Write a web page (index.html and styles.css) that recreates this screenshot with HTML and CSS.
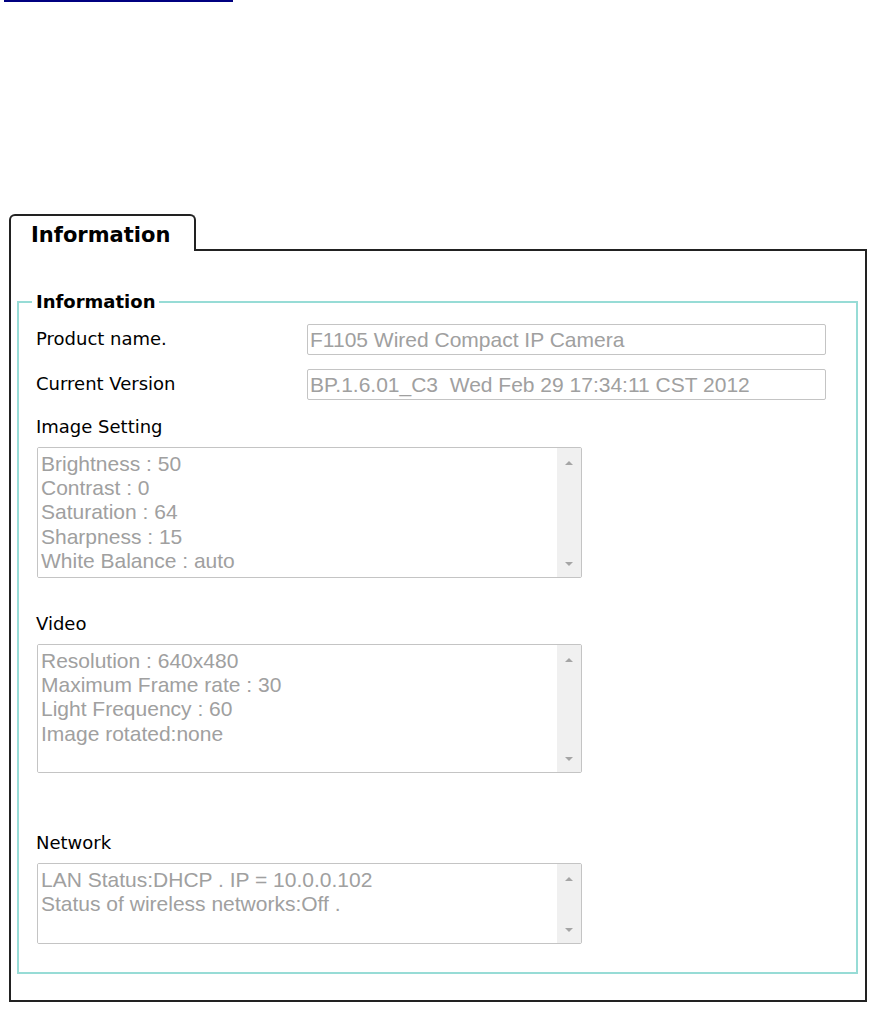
FILE: index.html
```html
<!DOCTYPE html>
<html lang="en">

<head>
    <meta charset="UTF-8">
    <meta name="viewport" content="width=device-width, initial-scale=1.0">
    <title>Information</title>
    <link rel="stylesheet" href="styles.css">
</head>

<body>
    <div class="topline"></div>

    <div class="tabs">
        <div class="tab">Information</div>
        <div class="tab-fill"></div>
    </div>

    <div class="panel">
        <fieldset class="info">
            <legend>Information</legend>

            <div class="row">
                <label for="product">Product name.</label>
                <input type="text" id="product" value="F1105 Wired Compact IP Camera" readonly>
            </div>
            <div class="row">
                <label for="version">Current Version</label>
                <input type="text" id="version" value="BP.1.6.01_C3  Wed Feb 29 17:34:11 CST 2012" readonly>
            </div>

            <div class="group first">
                <label class="group-label" for="image">Image Setting</label>
                <div class="tbox">
                    <textarea id="image" readonly>Brightness : 50
Contrast : 0
Saturation : 64
Sharpness : 15
White Balance : auto</textarea>
                    <div class="sbar"><span class="up"></span><span class="down"></span></div>
                </div>
            </div>

            <div class="group">
                <label class="group-label" for="video">Video</label>
                <div class="tbox video">
                    <textarea id="video" readonly>Resolution : 640x480
Maximum Frame rate : 30
Light Frequency : 60
Image rotated:none</textarea>
                    <div class="sbar"><span class="up"></span><span class="down"></span></div>
                </div>
            </div>

            <div class="group net">
                <label class="group-label" for="network">Network</label>
                <div class="tbox network">
                    <textarea id="network" readonly>LAN Status:DHCP . IP = 10.0.0.102
Status of wireless networks:Off .</textarea>
                    <div class="sbar"><span class="up"></span><span class="down"></span></div>
                </div>
            </div>
        </fieldset>
    </div>
</body>

</html>
```

FILE: styles.css
```css
body {
    margin: 0;
    font-family: "DejaVu Sans", Verdana, sans-serif;
    color: #000;
    background-color: #fff;
}

.topline {
    margin-left: 4px;
    width: 229px;
    height: 2px;
    background-color: #000080;
}

.tabs {
    display: flex;
    margin: 212px 0 0 9px;
    width: 858px;
}

.tab {
    width: 187px;
    box-sizing: border-box;
    border: 2px solid #222;
    border-bottom: none;
    border-radius: 6px 6px 0 0;
    padding: 7px 0 4px 20px;
    font-size: 21px;
    font-weight: bold;
    line-height: 24px;
}

.tab-fill {
    flex: 1;
    border-bottom: 2px solid #222;
}

.panel {
    margin-left: 9px;
    width: 858px;
    box-sizing: border-box;
    border: 2px solid #222;
    border-top: none;
    padding: 40px 7px 26px 6px;
}

.info {
    margin: 0;
    border: 2px solid #97dcd6;
    padding: 12px 10px 28px 17px;
}

.info legend {
    margin-left: -4px;
    padding: 0 4px;
    font-size: 18px;
    font-weight: bold;
    line-height: 21px;
}

.row {
    display: flex;
    align-items: flex-start;
}

.row + .row {
    margin-top: 14px;
}

.row label {
    width: 271px;
    margin-top: 4px;
    font-size: 18px;
    line-height: 21px;
}

.row input {
    width: 519px;
    height: 31px;
    box-sizing: border-box;
    border: 1px solid #c4c4c4;
    border-radius: 2px;
    padding: 0 2px;
    font-family: "Liberation Sans", Arial, sans-serif;
    font-size: 21px;
    color: #a0a0a0;
    background-color: #fff;
    outline: none;
}

.group {
    margin-top: 35px;
}

.group.first {
    margin-top: 16px;
}

.group.net {
    margin-top: 59px;
}

.group-label {
    display: block;
    margin-bottom: 10px;
    font-size: 18px;
    line-height: 21px;
}

.tbox {
    display: flex;
    width: 545px;
    height: 131px;
    margin-left: 1px;
    box-sizing: border-box;
    border: 1px solid #c4c4c4;
    border-radius: 2px;
    overflow: hidden;
}

.tbox.video {
    height: 129px;
}

.tbox.network {
    height: 81px;
}

.tbox textarea {
    flex: 1;
    border: none;
    padding: 4px 3px 3px;
    resize: none;
    overflow: hidden;
    font-family: "Liberation Sans", Arial, sans-serif;
    font-size: 21px;
    line-height: 24.2px;
    color: #a0a0a0;
    background-color: #fff;
    outline: none;
}

.sbar {
    width: 24px;
    background-color: #f0f0f0;
    display: flex;
    flex-direction: column;
    justify-content: space-between;
    align-items: center;
    padding: 13px 0 11px;
}

.sbar .up {
    border-left: 4px solid transparent;
    border-right: 4px solid transparent;
    border-bottom: 4px solid #a5a5a5;
}

.sbar .down {
    border-left: 4px solid transparent;
    border-right: 4px solid transparent;
    border-top: 4px solid #a5a5a5;
}
```
